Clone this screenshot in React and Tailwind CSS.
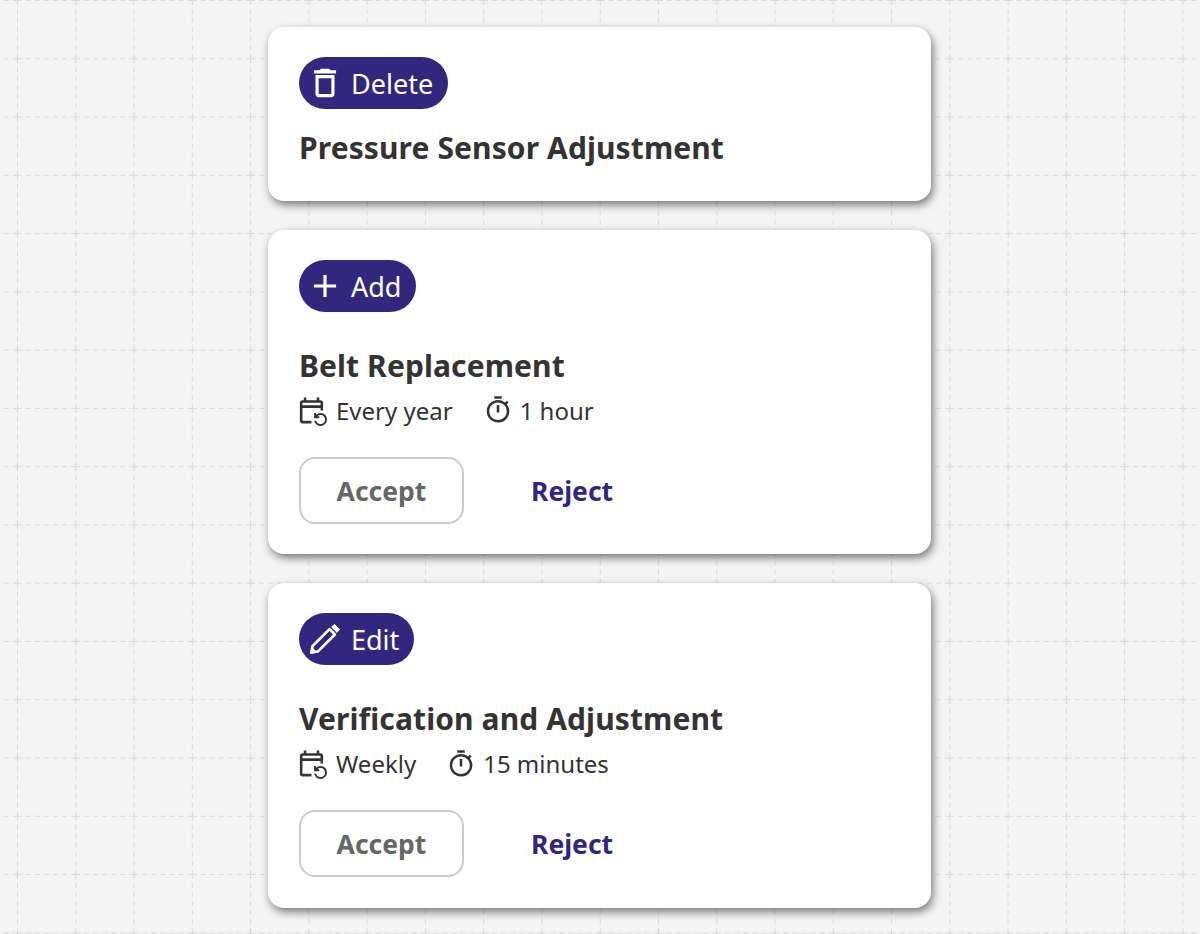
import {MdAdd, MdOutlineDelete, MdOutlineEventRepeat, MdOutlineTimer} from 'react-icons/md';

const GridBackground = () => (
    <svg className="absolute inset-0 w-full h-full" aria-hidden="true">
        <defs>
            <pattern id="grid" x="17" y="0" width="58.27" height="58.27" patternUnits="userSpaceOnUse">
                <path d="M0 0.5H58.27" stroke="#d9d9d9" strokeWidth="1" strokeDasharray="5 4" fill="none" />
                <path d="M0.5 0V58.27" stroke="#d9d9d9" strokeWidth="1" strokeDasharray="5 4" fill="none" />
            </pattern>
        </defs>
        <rect width="100%" height="100%" fill="url(#grid)" />
    </svg>
);

const PencilIcon = () => (
    <svg viewBox="0 0 38 38" className="w-[38px] h-[38px]" fill="none">
        <path d="M5.2 32.8 L6.6 26 L23.5 9.1 L28.9 14.5 L12 31.4 Z" stroke="white" strokeWidth="2.6" strokeLinejoin="round" />
        <path d="M6 27 L11 32 L4.5 33.5 Z" fill="white" />
        <path d="M25.6 7 L28.6 4.5 L33.5 9.4 L31 12.4 Z" fill="white" stroke="white" strokeWidth="1" strokeLinejoin="round" />
    </svg>
);

const Badge = ({icon, label}) => (
    <div className="inline-flex items-center self-start h-[52px] pl-[7px] pr-[15px] gap-[7px] rounded-[26px] bg-[#32277f] text-white text-[27px]">
        {icon}
        <span className="pt-[2px]">{label}</span>
    </div>
);

const Meta = ({icon, label, gap = 'gap-[7px]'}) => (
    <div className={`flex items-center ${gap}`}>
        {icon}
        <span>{label}</span>
    </div>
);

const SuggestionCard = ({icon, label, title, frequency, duration, titleMargin = 'mt-[33px]'}) => (
    <div className="flex flex-col w-[663px] pt-[30px] pb-[30.4px] pl-[31px] pr-[30px] rounded-2xl bg-white shadow-[2px_4px_8px_rgba(0,0,0,0.5)]">
        <Badge icon={icon} label={label} />
        <h2 className={`${titleMargin} text-[30px] leading-[41px] tracking-[0.1px] font-bold text-[#333333]`}>{title}</h2>
        {frequency && (
            <>
                <div className="flex items-center gap-[30px] mt-[8px] text-[24px] leading-[33px] text-[#333333]">
                    <Meta icon={<MdOutlineEventRepeat size={31} className="-ml-[3px]" />} label={frequency} gap="gap-[9px]" />
                    <Meta icon={<MdOutlineTimer size={30} />} label={duration} />
                </div>
                <div className="flex items-center mt-[30px] text-[26.5px] font-bold">
                    <button className="w-[165px] h-[67px] pt-[2px] rounded-2xl border-2 border-[#cccccc] text-[#666666]">Accept</button>
                    <button className="ml-[67px] pt-[2px] text-[#32277f]">Reject</button>
                </div>
            </>
        )}
    </div>
);

export default function App() {
    return (
        <div className="relative h-[934px] overflow-hidden bg-[#f4f4f4] font-['Noto_Sans',sans-serif]">
            <GridBackground />
            <div className="relative flex flex-col items-start gap-[29px] pt-[27px] pl-[268px]">
                <SuggestionCard
                    icon={<MdOutlineDelete size={38} />}
                    label="Delete"
                    title="Pressure Sensor Adjustment"
                    titleMargin="mt-[18px] mb-[2.6px]"
                />
                <SuggestionCard
                    icon={<MdAdd size={38} />}
                    label="Add"
                    title="Belt Replacement"
                    frequency="Every year"
                    duration="1 hour"
                />
                <SuggestionCard
                    icon={<PencilIcon />}
                    label="Edit"
                    title="Verification and Adjustment"
                    frequency="Weekly"
                    duration="15 minutes"
                />
            </div>
        </div>
    );
}
